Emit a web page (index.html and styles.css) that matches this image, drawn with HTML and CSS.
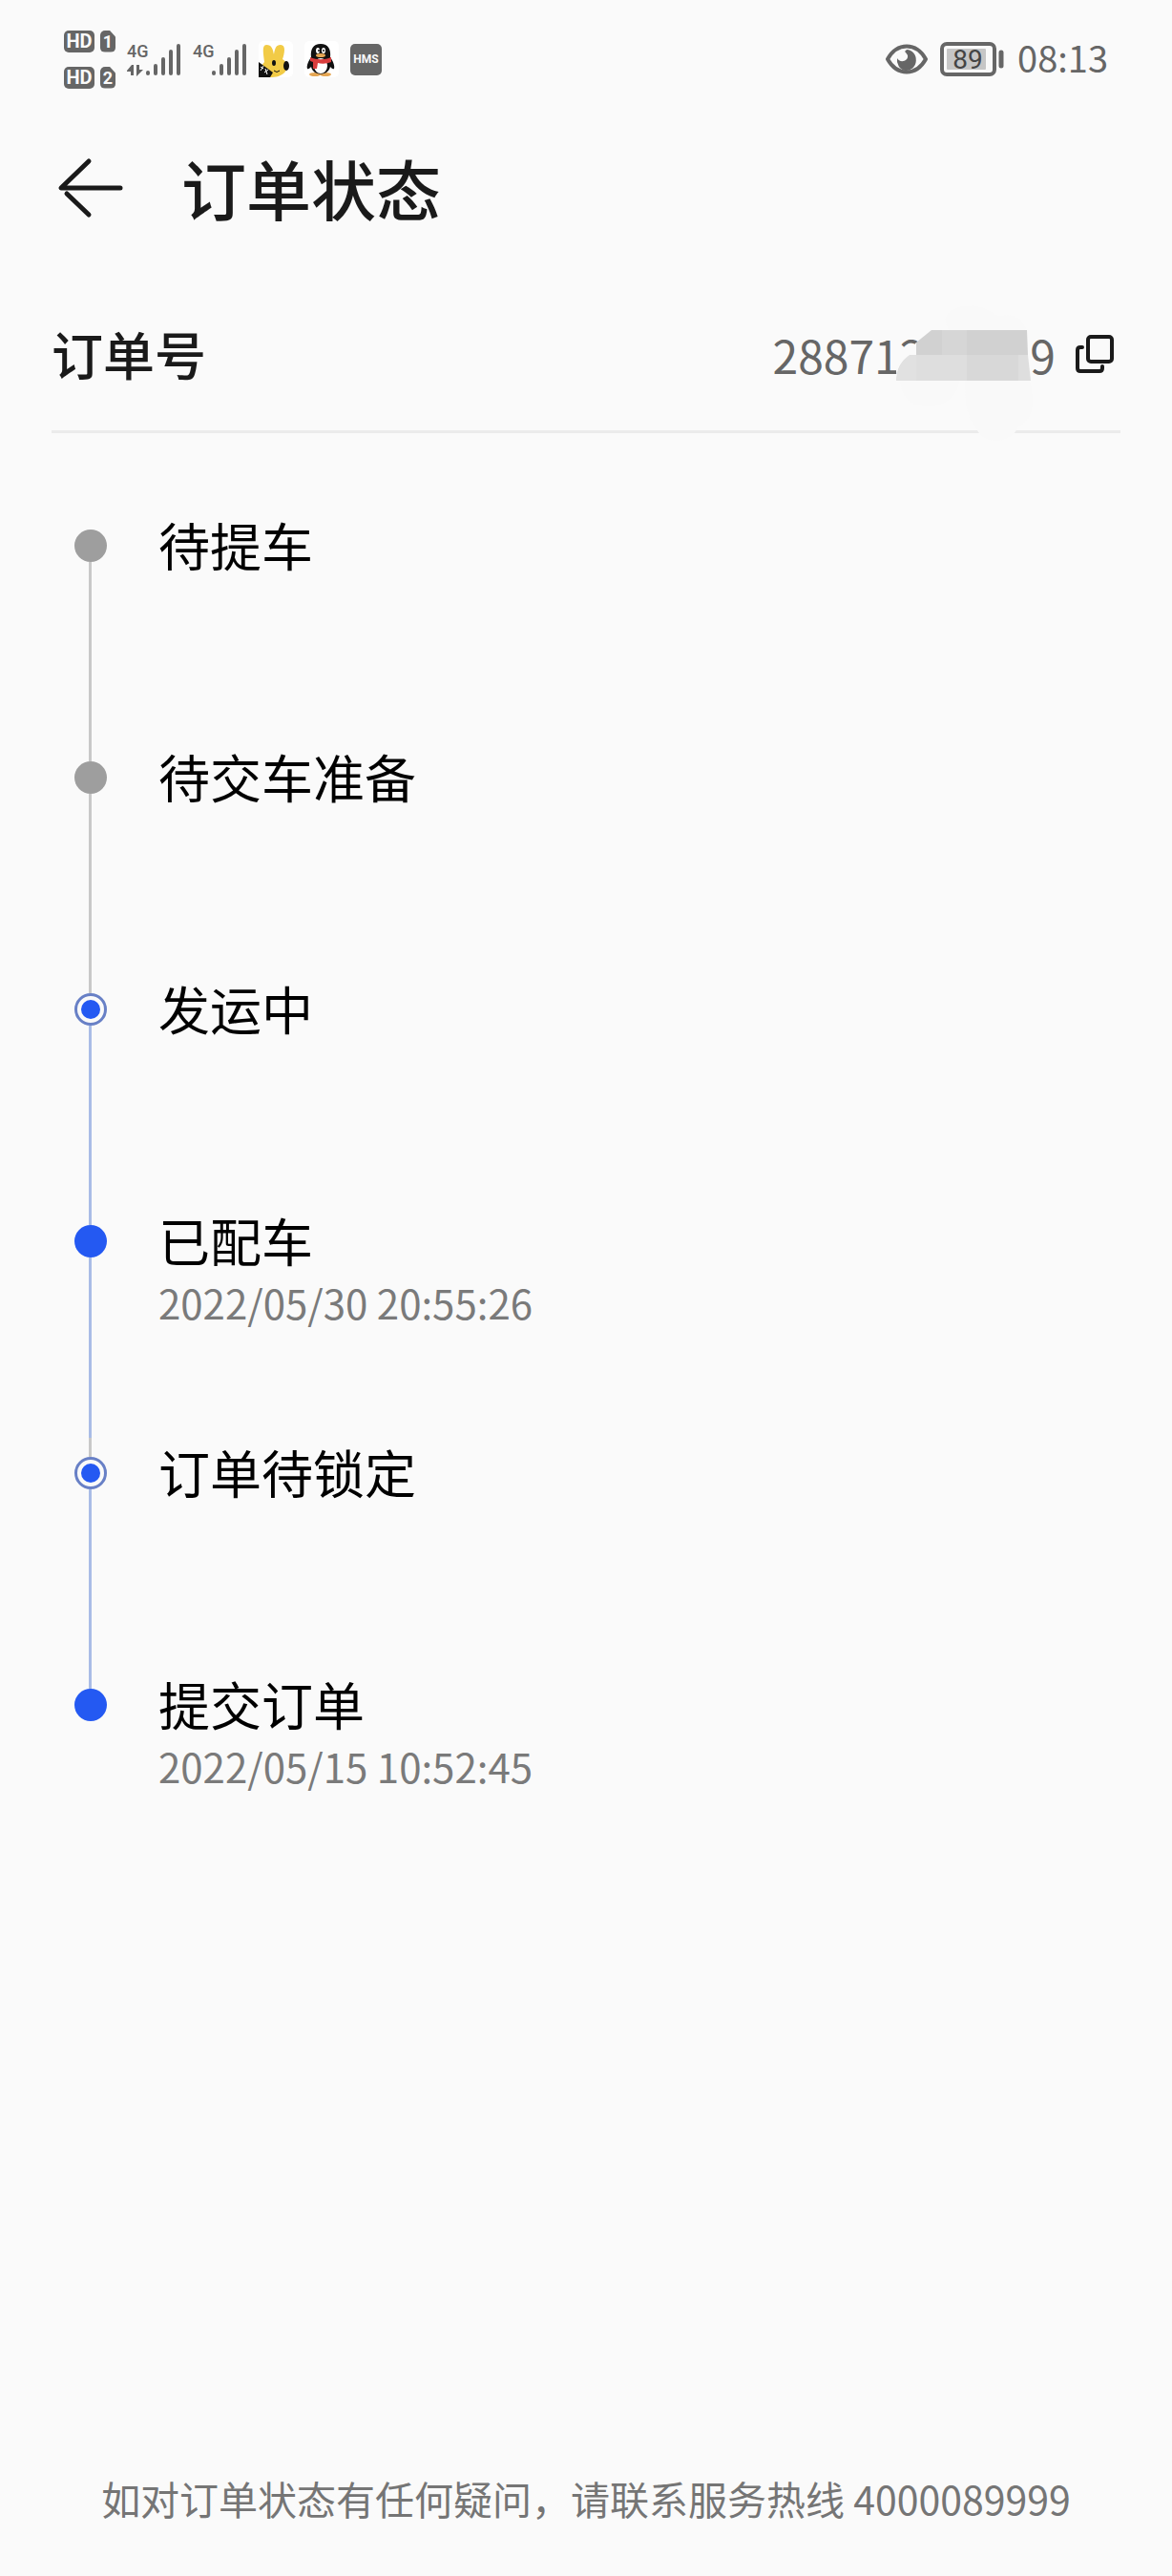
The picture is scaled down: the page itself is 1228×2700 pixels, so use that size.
FILE: index.html
```html
<!DOCTYPE html>
<html lang="zh-CN">
<head>
  <meta charset="UTF-8">
  <meta name="viewport" content="width=device-width, initial-scale=1.0">
  <title>订单状态</title>
  <link rel="stylesheet" href="styles.css">
</head>
<body>
  <div class="status-bar">
    <div class="status-left">
      <div class="hd-list">
        <div class="hd-row">
          <span class="hd">HD</span>
          <span class="sim">1</span>
        </div>
        <div class="hd-row">
          <span class="hd">HD</span>
          <span class="sim">2</span>
        </div>
      </div>
      <svg class="signal" width="58" height="38" viewBox="0 0 58 38">
        <text class="signal-text" x="0" y="17">4G</text>
        <g stroke="#666" stroke-width="4" stroke-linecap="round">
          <path d="M22 33v1M30 26v8M38 19v15M46 11v23M54 5v29" />
        </g>
        <path d="M7 36V25h-2L0 31v1h4v4zM10 25v12l7-7h-4v-5z" fill="#666" />
      </svg>
      <svg class="signal" width="58" height="38" viewBox="0 0 58 38">
        <text class="signal-text" x="0" y="17">4G</text>
        <g stroke="#666" stroke-width="4" stroke-linecap="round">
          <path d="M22 33v1M30 26v8M38 19v15M46 11v23M54 5v29" />
        </g>
      </svg>
      <!-- notification icons -->
      <svg class="app-icon" width="36" height="38" viewBox="0 0 36 38">
        <rect width="36" height="38" rx="5" fill="#fff" />
        <path d="M6 22C5 14 3 4 8 4c6 0 7 5 8 10 1-6 2-10 7-10 6 0 4 9 2 15 5 3 6 9 3 13-4 5-10 6-16 6L3 26z" fill="#f2cb46" />
        <ellipse cx="16" cy="23" rx="2" ry="3" fill="#111" />
        <ellipse cx="29" cy="26" rx="3" ry="5" fill="#111" />
        <path d="M16 31q3 3 6 0" fill="none" stroke="#111" stroke-width="1" />
        <path d="M0 22l15 11-3 5H0z" fill="#111" />
        <path d="M2 27l3 2M2 31l3-5M6 33l4-3M7 29l2 6" stroke="#fff" stroke-width="1" />
      </svg>
      <svg class="app-icon" width="36" height="38" viewBox="0 0 36 38">
        <rect width="36" height="38" rx="5" fill="#fff" />
        <ellipse cx="11" cy="35" rx="6" ry="2" fill="#e5a653" />
        <ellipse cx="22" cy="35" rx="6" ry="2" fill="#e5a653" />
        <path d="M17 3c-8 0-11 6-10 14-3 4-5 9-4 12 1 1 3-1 4-2 2 10 18 10 20 0 1 1 3 3 4 2 1-3-1-8-4-12 1-8-2-14-10-14z" fill="#111" />
        <ellipse cx="17" cy="26" rx="7" ry="8" fill="#fff" />
        <path d="M6 17c7 3 15 3 22 0v5c-5 2-10 2-14 1l-1 6H9v-7l-3-1z" fill="#d83c3c" />
        <ellipse cx="14" cy="10" rx="2" ry="3" fill="#fff" />
        <ellipse cx="20" cy="10" rx="2" ry="3" fill="#fff" />
        <circle cx="15" cy="10" r="1" fill="#111" />
        <circle cx="20" cy="10" r="1" fill="#111" />
        <ellipse cx="17" cy="15" rx="5" ry="2" fill="#e5a653" />
      </svg>
      <span class="hms">HMS</span>
    </div>
    <div class="status-right">
      <svg width="44" height="32" viewBox="0 0 44 32">
        <path d="M2 16C12-2 32-2 42 16 32 34 12 34 2 16z" fill="none" stroke="#666" stroke-width="4" stroke-linejoin="round" />
        <path d="M22 6a10 11 0 1 1-10 9c2 5 12 4 11-3-1-2-2-3-3-4z" fill="#666" />
      </svg>
      <svg class="battery" width="68" height="36" viewBox="0 0 68 36">
        <rect x="2" y="2" width="55" height="32" rx="5" fill="none" stroke="#666" stroke-width="4" />
        <rect x="7" y="7" width="41" height="22" rx="1" fill="#c6c6c6" />
        <path d="M64 11v14" stroke="#666" stroke-width="5" stroke-linecap="round" />
        <text class="battery-text" x="29" y="28" text-anchor="middle">89</text>
      </svg>
      <span class="time">08:13</span>
    </div>
  </div>

  <div class="header">
    <button class="back" type="button" aria-label="返回">
      <svg width="70" height="64" viewBox="0 0 70 64">
        <path d="M33 4L4 32H66M10 38L33 60" fill="none" stroke="#1a1a1a" stroke-width="5" stroke-linecap="round" stroke-linejoin="round" />
      </svg>
    </button>
    <h1>订单状态</h1>
  </div>

  <div class="order">
    <h2>订单号</h2>
    <div class="order-number">
      <span>288712</span>
      <span class="mask">
        <svg width="150" height="144" viewBox="0 0 150 144">
          <path d="M55 27C45 10 60 0 82 2s18 12 30 10 22 4 24 15zM4 80h62c-2 20-18 27-34 27S6 98 4 80zM72 80h68c8 32-1 42-12 48-8 20-38 20-45 0-10-10-11-30-11-48z" fill="#f9f9f9" />
          <path d="M0 80c0-14 7-25 21-27h117l3 27z" fill="#dedede" />
          <path d="M21 53V40L37 27h100l1 26z" fill="#d1d1d1" />
          <path d="M48 27h26v26H48z" fill="#d6d6d6" />
          <path d="M74 53h54v27H74z" fill="#d8d8d8" />
          <path d="M21 40v13H8Q1 62 0 80V62z" fill="#fafafa" />
          <path d="M0 80C1 68 5 59 14 53h7v27z" fill="#e1e1e1" />
        </svg>
      </span>
      <span>9</span>
    </div>
    <button class="copy" type="button" aria-label="复制">
      <svg width="40" height="40" viewBox="0 0 40 40" fill="none" stroke="#1a1a1a" stroke-width="4" stroke-linecap="round">
        <rect x="13" y="2" width="25" height="26" rx="3" />
        <path d="M7 13H5q-3 0-3 3v19q0 3 3 3h20q3 0 3-3v-2" />
      </svg>
    </button>
  </div>

  <ul class="timeline">
    <li class="step">
      <div class="rail">
        <span class="dot"></span>
        <span class="line"></span>
      </div>
      <div class="info">
        <h3>待提车</h3>
      </div>
    </li>
    <li class="step">
      <div class="rail">
        <span class="dot"></span>
        <span class="line"></span>
      </div>
      <div class="info">
        <h3>待交车准备</h3>
      </div>
    </li>
    <li class="step">
      <div class="rail">
        <span class="dot current"></span>
        <span class="line active"></span>
      </div>
      <div class="info">
        <h3>发运中</h3>
      </div>
    </li>
    <li class="step">
      <div class="rail">
        <span class="dot done"></span>
        <span class="line active short"></span>
      </div>
      <div class="info">
        <h3>已配车</h3>
        <p>2022/05/30 20:55:26</p>
      </div>
    </li>
    <li class="step">
      <div class="rail">
        <span class="dot current"></span>
        <span class="line active"></span>
      </div>
      <div class="info">
        <h3>订单待锁定</h3>
      </div>
    </li>
    <li class="step">
      <div class="rail">
        <span class="dot done"></span>
      </div>
      <div class="info">
        <h3>提交订单</h3>
        <p>2022/05/15 10:52:45</p>
      </div>
    </li>
  </ul>

  <div class="footer">如对订单状态有任何疑问，请联系服务热线 4000089999</div>
</body>
</html>
```
FILE: styles.css
```css
* {
  box-sizing: border-box;
}
body {
  font-family: "Noto Sans CJK SC", sans-serif;
  margin: 0;
  min-height: 100vh;
  display: flex;
  flex-direction: column;
  background-color: #fafafa;
  color: #1a1a1a;
}
h1, h2, h3, p {
  margin: 0;
}
svg {
  display: block;
}
button {
  border: none;
  background: none;
  padding: 0;
}

/* status bar */
.status-bar {
  display: flex;
  justify-content: space-between;
  align-items: center;
  height: 124px;
  padding: 0 67px;
  color: #666;
}
.status-left, .status-right {
  display: flex;
  align-items: center;
}
.hd-list {
  display: flex;
  flex-direction: column;
  gap: 15px;
  margin-right: 12px;
}
.hd-row {
  display: flex;
  gap: 6px;
}
.hd, .sim {
  height: 23px;
  line-height: 23px;
  font-family: Roboto, sans-serif;
  font-size: 20px;
  font-weight: 700;
  text-align: center;
  color: #fafafa;
  background-color: #666;
  border-radius: 5px;
}
.hd {
  width: 32px;
}
.sim {
  width: 16px;
  font-size: 18px;
  clip-path: polygon(0 0, 60% 0, 100% 30%, 100% 100%, 0 100%);
}
.signal {
  margin-right: 11px;
}
.signal-text {
  font-family: Roboto, sans-serif;
  font-size: 18px;
  font-weight: 500;
  fill: #666;
}
.app-icon {
  margin-right: 12px;
}
.hms {
  width: 33px;
  height: 33px;
  line-height: 33px;
  border-radius: 5px;
  background-color: #666;
  color: #fafafa;
  font-family: Roboto, sans-serif;
  font-size: 12px;
  font-weight: 700;
  text-align: center;
}
.battery {
  margin: 0 13px;
}
.battery-text {
  font-family: Roboto, sans-serif;
  font-size: 28px;
  fill: #444;
}
.time {
  font-size: 38px;
  line-height: 56px;
  padding-bottom: 4px;
}

/* title */
.header {
  display: flex;
  align-items: center;
  gap: 60px;
  height: 146px;
  padding: 0 60px;
}
.header h1 {
  font-size: 68px;
  font-weight: 500;
  line-height: 80px;
}

/* order number */
.order {
  display: flex;
  align-items: center;
  height: 184px;
  margin: 0 54px;
  padding-top: 20px;
  border-bottom: 3px solid #ebebeb;
}
.order h2 {
  flex: 1;
  font-size: 54px;
  font-weight: 500;
  line-height: 60px;
}
.order-number {
  display: flex;
  font-size: 48px;
  line-height: 60px;
  color: #666;
}
.mask {
  position: relative;
  width: 110px;
}
.mask svg {
  position: absolute;
  right: -10px;
  top: -22px;
}
.copy {
  margin: 0 7px 0 21px;
}

/* steps */
.timeline {
  list-style: none;
  flex: 1;
  margin: 0;
  padding: 101px 54px 0 78px;
}
.step {
  display: flex;
  gap: 54px;
  height: 243px;
}
.rail {
  display: flex;
  flex-direction: column;
  width: 34px;
}
.dot {
  width: 34px;
  height: 34px;
  border-radius: 50%;
  background-color: #9e9e9e;
}
.dot.done {
  background-color: #2459f2;
}
.dot.current {
  border: 3px solid #6880c6;
  padding: 4px;
  background: #2459f2 content-box;
}
.line {
  flex: 1;
  width: 3px;
  margin-left: 15px;
  background-color: #c8c8c8;
}
.line.active {
  background-color: #a9bce6;
}
.line.short {
  border-bottom: 20px solid #c8c8c8;
}
.info h3 {
  font-size: 54px;
  font-weight: 400;
  line-height: 32px;
  color: #000;
}
.info p {
  margin-top: 28px;
  font-size: 42px;
  line-height: 42px;
  color: #7a7a7a;
}

.footer {
  padding: 0 54px 52px;
  font-size: 41px;
  line-height: 60px;
  text-align: center;
  color: #757575;
}
```
